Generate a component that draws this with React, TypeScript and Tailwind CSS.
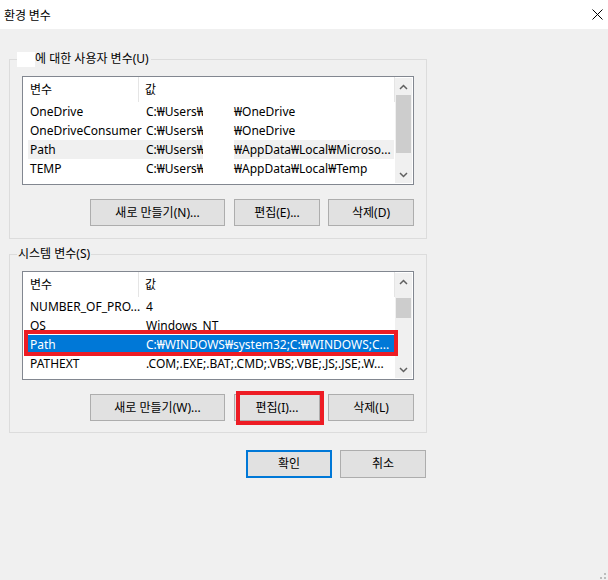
import React from 'react'

type Row = {
  name: string
  value: string
  user?: boolean
  tail?: string
  hot?: boolean
  selected?: boolean
  marked?: boolean
}

const userRows: Row[] = [
  { name: 'OneDrive', value: 'C:₩Users₩', user: true, tail: '₩OneDrive' },
  { name: 'OneDriveConsumer', value: 'C:₩Users₩', user: true, tail: '₩OneDrive' },
  { name: 'Path', value: 'C:₩Users₩', user: true, tail: '₩AppData₩Local₩Microso...', hot: true },
  { name: 'TEMP', value: 'C:₩Users₩', user: true, tail: '₩AppData₩Local₩Temp' },
]

const systemRows: Row[] = [
  { name: 'NUMBER_OF_PRO...', value: '4' },
  { name: 'OS', value: 'Windows_NT' },
  { name: 'Path', value: 'C:₩WINDOWS₩system32;C:₩WINDOWS;C...', selected: true, marked: true },
  { name: 'PATHEXT', value: '.COM;.EXE;.BAT;.CMD;.VBS;.VBE;.JS;.JSE;.W...' },
]

function Chevron({ down }: { down?: boolean }) {
  return (
    <svg width="9" height="6" viewBox="0 0 9 6">
      <polyline
        points={down ? '1,1 4.5,4.5 8,1' : '1,5 4.5,1.5 8,5'}
        fill="none"
        stroke="#606060"
        strokeWidth="1.5"
      />
    </svg>
  )
}

function VarList({ rows, thumbTop, thumbHeight }: { rows: Row[]; thumbTop: string; thumbHeight: string }) {
  return (
    <div className="w-[392px] h-[109px] border border-[#828790] bg-white flex">
      <div className="flex-1 flex flex-col">
        <div className="h-[25px] flex items-center">
          <div className="w-[116px] h-full pl-[7px] flex items-center border-r border-[#e5e5e5]">변수</div>
          <div className="flex-1 h-full pl-[6px] flex items-center border-r border-[#e5e5e5]">값</div>
        </div>
        <div className="pl-[5px] pr-[1px]">
          {rows.map((r) => (
            <div
              key={r.name}
              className={`relative h-[19px] flex items-center whitespace-nowrap ${
                r.selected ? 'bg-[#0078d7] text-white' : r.hot ? 'bg-[#f0f0f0]' : ''
              }`}
            >
              <div className="w-[111px] pl-[2px]">{r.name}</div>
              {r.user ? (
                <>
                  <div className="w-[64px] pl-[7px]">{r.value}</div>
                  <div className="w-[31px] h-full bg-white" />
                  <div className="flex-1">{r.tail}</div>
                </>
              ) : (
                <div className="flex-1 pl-[7px]">{r.value}</div>
              )}
              {r.marked && (
                <div className="absolute -left-[4px] -top-[5px] w-[374px] h-[26px] border-[4px] border-[#ed1c24]" />
              )}
            </div>
          ))}
        </div>
      </div>
      <div className="w-[17px] my-[1px] mr-[1px] bg-[#f0f0f0] flex flex-col">
        <div className="h-[17px] flex items-center justify-center">
          <Chevron />
        </div>
        <div className="flex-1">
          <div className={`mx-[1px] bg-[#cdcdcd] ${thumbTop} ${thumbHeight}`} />
        </div>
        <div className="h-[17px] flex items-center justify-center">
          <Chevron down />
        </div>
      </div>
    </div>
  )
}

function Button({ children, wide, marked }: { children: React.ReactNode; wide?: boolean; marked?: boolean }) {
  return (
    <div className="relative">
      <button
        className={`${wide ? 'w-[135px]' : 'w-[86px]'} h-[27px] border border-[#adadad] bg-[#e1e1e1] flex items-center justify-center`}
      >
        {children}
      </button>
      {marked && (
        <div className="absolute left-[2px] -top-[3px] w-[88px] h-[34px] border-[4px] border-[#ed1c24]" />
      )}
    </div>
  )
}

export default function App() {
  return (
    <div className="relative w-[608px] h-[580px] flex flex-col bg-[#f0f0f0] overflow-hidden text-[12px] leading-[16px] text-black font-['Noto_Sans','Noto_Sans_CJK_KR',sans-serif]">
      <div className="h-[29px] bg-white flex items-center justify-between pl-[4px] pr-[5px] shrink-0">
        <span className="font-['Noto_Sans_CJK_KR',sans-serif]">환경 변수</span>
        <svg width="11" height="11" viewBox="0 0 11 11">
          <path d="M0.5 0.5 L10.5 10.5 M10.5 0.5 L0.5 10.5" stroke="#000" strokeWidth="1" />
        </svg>
      </div>

      <div className="flex-1 pl-[9px] pt-[22px]">
        <fieldset className="w-[418px] border border-[#dcdcdc] pb-[12px]">
          <legend className="ml-[7px] pr-[2px] h-[16px] flex items-center">
            <span className="shrink-0 inline-block w-[18px] h-[15px] bg-white" />
            <span>에 대한 사용자 변수(U)</span>
          </legend>
          <div className="pl-[12px]">
            <div className="mt-[9px]">
              <VarList rows={userRows} thumbTop="mt-0" thumbHeight="h-[58px]" />
            </div>
            <div className="mt-[14px] flex justify-end w-[392px]">
              <Button wide>새로 만들기(N)...</Button>
              <div className="ml-[9px]">
                <Button>편집(E)...</Button>
              </div>
              <div className="ml-[8px]">
                <Button>삭제(D)</Button>
              </div>
            </div>
          </div>
        </fieldset>

        <fieldset className="mt-[7px] w-[418px] border border-[#dcdcdc] pb-[11px]">
          <legend className="ml-[7px] px-[1px] h-[16px] flex items-center">시스템 변수(S)</legend>
          <div className="pl-[12px]">
            <div className="mt-[9px]">
              <VarList rows={systemRows} thumbTop="mt-[8px]" thumbHeight="h-[20px]" />
            </div>
            <div className="mt-[14px] flex justify-end w-[392px]">
              <Button wide>새로 만들기(W)...</Button>
              <div className="ml-[9px]">
                <Button marked>편집(I)...</Button>
              </div>
              <div className="ml-[8px]">
                <Button>삭제(L)</Button>
              </div>
            </div>
          </div>
        </fieldset>

        <div className="mt-[17px] w-[417px] flex justify-end gap-[8px]">
          <button className="w-[86px] h-[28px] border-2 border-[#0078d7] bg-[#e1e1e1] flex items-center justify-center">
            확인
          </button>
          <button className="w-[86px] h-[28px] border border-[#adadad] bg-[#e1e1e1] flex items-center justify-center">
            취소
          </button>
        </div>
      </div>

      <svg className="absolute right-[1px] bottom-0" width="7" height="7" viewBox="0 0 7 7">
        <rect x="4" y="0" width="2" height="2" fill="#bcbcbc" />
        <rect x="4" y="4" width="2" height="2" fill="#bcbcbc" />
        <rect x="0" y="4" width="2" height="2" fill="#bcbcbc" />
      </svg>
    </div>
  )
}
